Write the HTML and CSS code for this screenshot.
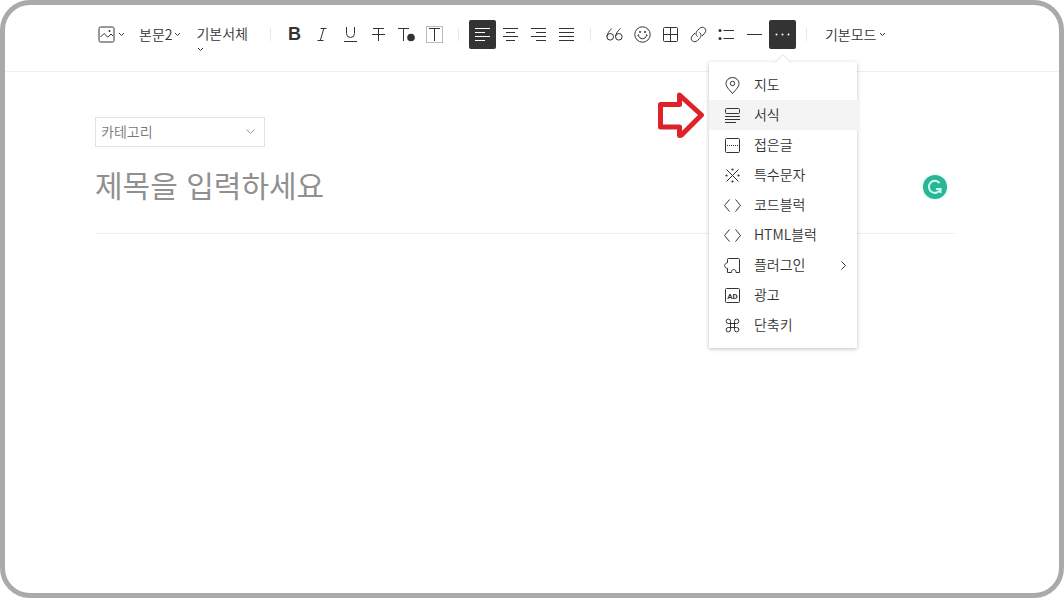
FILE: index.html
```
<!DOCTYPE html>
<html lang="ko">
<head>
    <meta charset="UTF-8">
    <meta name="viewport" content="width=device-width, initial-scale=1.0">
    <title>글쓰기</title>
    <link rel="stylesheet" href="styles.css">
</head>
<body>
<div class="frame">
    <header class="topbar">
        <div class="toolbar">
            <button class="drop drop-image" aria-label="사진">
                <svg width="17" height="17" viewBox="0 0 17 17"><rect x="1" y="1" width="15" height="15" rx="1.5"/><path d="M2.500 11 5.500 8c3-1 2 3 4.500 3l3-3 2 2"/><circle class="dot" cx="11.500" cy="5" r="1"/></svg>
                <svg class="chev" width="7" height="5" viewBox="0 0 7 5"><path d="M1 1l2.500 2.500L6 1"/></svg>
            </button>
            <button class="drop drop-style"><span class="label">본문2</span><svg class="chev" width="7" height="5" viewBox="0 0 7 5"><path d="M1 1l2.500 2.500L6 1"/></svg></button>
            <button class="drop drop-font"><span class="label">기본서체</span><svg class="chev" width="7" height="5" viewBox="0 0 7 5"><path d="M1 1l2.500 2.500L6 1"/></svg></button>
            <span class="sep"></span>
            <div class="group">
                <button class="tool" aria-label="굵게"><b>B</b></button>
                <button class="tool" aria-label="기울임"><svg width="17" height="17" viewBox="0 0 17 17"><path d="M6.500 2.500h6M3.500 14.500h6M9.800 2.500l-3.500 12"/></svg></button>
                <button class="tool" aria-label="밑줄"><svg width="17" height="17" viewBox="0 0 17 17"><path d="M4.500 1v6.500a4 4 0 0 0 8 0V1M2 15.500h13"/></svg></button>
                <button class="tool" aria-label="취소선"><svg width="17" height="17" viewBox="0 0 17 17"><path d="M3 2.500h11M8.500 2.500V15M2 8.500h13"/></svg></button>
                <button class="tool" aria-label="글자색"><svg width="17" height="17" viewBox="0 0 17 17"><path d="M0 2.500h11M5.500 2.500V15"/><circle class="dot" cx="13" cy="11.500" r="3.800"/></svg></button>
                <button class="tool" aria-label="배경색"><svg width="17" height="17" viewBox="0 0 17 17"><rect class="pale" x=".5" y=".5" width="16" height="16"/><path d="M3 2.500h11M8.500 2.500V15"/></svg></button>
            </div>
            <span class="sep"></span>
            <div class="group">
                <button class="tool on" aria-label="왼쪽 정렬"><svg width="17" height="17" viewBox="0 0 17 17"><path d="M1 2.500h15M1 6.500h10M1 10.500h15M1 14.500h10"/></svg></button>
                <button class="tool" aria-label="가운데 정렬"><svg width="17" height="17" viewBox="0 0 17 17"><path d="M1 2.500h15M4 6.500h9M1 10.500h15M4 14.500h9"/></svg></button>
                <button class="tool" aria-label="오른쪽 정렬"><svg width="17" height="17" viewBox="0 0 17 17"><path d="M1 2.500h15M6 6.500h10M1 10.500h15M6 14.500h10"/></svg></button>
                <button class="tool" aria-label="양쪽 정렬"><svg width="17" height="17" viewBox="0 0 17 17"><path d="M1 2.500h15M1 6.500h15M1 10.500h15M1 14.500h15"/></svg></button>
            </div>
            <span class="sep"></span>
            <div class="group">
                <button class="tool" aria-label="인용"><svg width="17" height="17" viewBox="0 0 17 17"><circle cx="4.200" cy="10.800" r="3.300"/><path d="M5.800 2.500C3 5 1.300 7.600.9 10.500"/><circle cx="12.800" cy="10.800" r="3.300"/><path d="M14.400 2.500C11.600 5 9.900 7.600 9.500 10.500"/></svg></button>
                <button class="tool" aria-label="이모티콘"><svg width="17" height="17" viewBox="0 0 17 17"><circle cx="8.500" cy="8.500" r="7.700"/><path d="M4.500 9c.5 5 7.500 5 8 0M3.500 9.500l1.500-1M13.500 9.500l-1.500-1"/><circle class="dot" cx="6" cy="6" r="1"/><circle class="dot" cx="11" cy="6" r="1"/></svg></button>
                <button class="tool" aria-label="표"><svg width="17" height="17" viewBox="0 0 17 17"><rect x="1.500" y="1.500" width="14" height="14" rx="1"/><path d="M8.500 1.500v14M1.500 8.500h14"/></svg></button>
                <button class="tool" aria-label="링크"><svg width="17" height="17" viewBox="0 0 17 17"><path d="M7.500 10.500c-2-1.500-2-4 0-6l2-2c3.500-3.500 8.500 1 5.200 4.700L12 10"/><path d="M9.500 6.500c2 1.500 2 4 0 6l-2 2C4 18-1 13.500 2.300 9.800L5 7"/></svg></button>
                <button class="tool" aria-label="목록"><svg width="17" height="17" viewBox="0 0 17 17"><circle class="dot" cx="2" cy="4.500" r="1.500"/><circle class="dot" cx="2" cy="12.500" r="1.500"/><path d="M5.500 4.500H16M5.500 12.500H16"/></svg></button>
                <button class="tool" aria-label="구분선"><svg width="17" height="17" viewBox="0 0 17 17"><path d="M1 8.500h15"/></svg></button>
                <div class="more">
                    <button class="tool on" aria-label="더보기"><svg width="17" height="17" viewBox="0 0 17 17"><circle class="dot" cx="2.500" cy="8.500" r="1"/><circle class="dot" cx="8.500" cy="8.500" r="1"/><circle class="dot" cx="14.500" cy="8.500" r="1"/></svg></button>
                    <div class="menu">
                        <svg class="notch" width="18" height="10" viewBox="0 0 18 10"><path d="M1 9.500l8-8 8 8"/></svg>
                        <button class="item"><svg width="17" height="17" viewBox="0 0 17 17"><path d="M8.500 16.500C5 12.500 2 9.800 2 6.500a6.500 6 0 0 1 13 0c0 3.300-3 6-6.500 10z"/><circle cx="8.500" cy="6.500" r="2.200"/></svg><span class="label">지도</span></button>
                        <button class="item current"><svg width="17" height="17" viewBox="0 0 17 17"><rect x="1.500" y="1.500" width="14" height="5" rx="1"/><path d="M1 9.500h15M1 12.500h15M1 15.500h11"/></svg><span class="label">서식</span>
                            <svg class="pointer" width="48" height="48" viewBox="0 0 48 48"><path d="M3.500 13.500h19V4L44.500 24l-20 20-2 .5V36h-19z"/></svg>
                        </button>
                        <button class="item"><svg width="17" height="17" viewBox="0 0 17 17"><rect x="1.500" y="1.500" width="14" height="14" rx="1"/><path class="dots" d="M3 8.500h11.500"/></svg><span class="label">접은글</span></button>
                        <button class="item"><svg width="17" height="17" viewBox="0 0 17 17"><path d="M2.500 2.500l12 12M14.500 2.500l-12 12"/><circle class="dot" cx="8.500" cy="2.500" r="1.100"/><circle class="dot" cx="8.500" cy="14.500" r="1.100"/><circle class="dot" cx="2.500" cy="8.500" r="1.100"/><circle class="dot" cx="14.500" cy="8.500" r="1.100"/></svg><span class="label">특수문자</span></button>
                        <button class="item"><svg width="17" height="17" viewBox="0 0 17 17"><path d="M5.500 2.500l-5 6 5 6M11.500 2.500l5 6-5 6"/></svg><span class="label">코드블럭</span></button>
                        <button class="item"><svg width="17" height="17" viewBox="0 0 17 17"><path d="M5.500 2.500l-5 6 5 6M11.500 2.500l5 6-5 6"/></svg><span class="label">HTML블럭</span></button>
                        <button class="item"><svg width="17" height="17" viewBox="0 0 17 17"><path d="M4.500 1.500h10a1 1 0 0 1 1 1v13h-3.500c.5-4-5-4-4.500 0h-4v-4.200C.2 11.700-.6 6.300 3.500 5.700V2.500a1 1 0 0 1 1-1z"/></svg><span class="label">플러그인</span><svg class="go" width="7" height="9" viewBox="0 0 7 9"><path d="M1.500 .5l4 4-4 4"/></svg></button>
                        <button class="item"><svg width="17" height="17" viewBox="0 0 17 17"><rect x="1.500" y="1.500" width="14" height="14" rx="1"/><text class="ad" x="8.500" y="11.500">AD</text></svg><span class="label">광고</span></button>
                        <button class="item"><svg width="17" height="17" viewBox="0 0 17 17"><path d="M6.500 6.500v-2a2.200 2.200 0 1 0-2.200 2h8.400a2.200 2.200 0 1 0-2.200-2v8a2.200 2.200 0 1 0 2.200-2H4.300a2.200 2.200 0 1 0 2.200 2z"/></svg><span class="label">단축키</span></button>
                    </div>
                </div>
            </div>
            <span class="sep"></span>
            <button class="drop drop-mode"><span class="label">기본모드</span><svg class="chev" width="7" height="5" viewBox="0 0 7 5"><path d="M1 1l2.500 2.500L6 1"/></svg></button>
        </div>
    </header>
    <main class="editor">
        <div class="category">
            <select aria-label="카테고리"><option>카테고리</option></select>
            <svg class="arrow" width="9" height="6" viewBox="0 0 9 6"><path d="M.5 .5l4 4 4-4"/></svg>
        </div>
        <div class="title-row">
            <input class="title" type="text" placeholder="제목을 입력하세요" aria-label="제목">
            <button class="checker" aria-label="맞춤법 검사"><svg width="16" height="16" viewBox="0 0 16 16"><path d="M12.500 4A6 6 0 1 0 13.500 10H9M13.500 9v5"/></svg></button>
        </div>
    </main>
</div>
</body>
</html>
```
FILE: styles.css
```
* { box-sizing: border-box; }
body {
    margin: 0;
    background: #fff;
    color: #333;
    font-family: "Noto Sans CJK KR", sans-serif;
    font-size: 14px;
    font-weight: 350;
}
button, input, select { font: inherit; color: inherit; }
button { border: none; background: none; padding: 0; cursor: pointer; }
svg { fill: none; stroke: #333; flex: none; }
svg .dot { fill: #333; stroke: none; }
.label { padding-bottom: 2px; line-height: 20px; }
.frame {
    min-height: 100vh;
    border: 5px solid #aaa;
    border-radius: 30px;
}

/* toolbar */
.topbar {
    height: 67px;
    padding: 15px 14px 0 0;
    border-bottom: 1px solid #eee;
}
.toolbar {
    display: flex;
    align-items: flex-start;
    max-width: 860px;
    margin: 0 auto;
}
.drop {
    display: flex;
    align-items: center;
    height: 29px;
    gap: 2px;
    white-space: nowrap;
}
.drop-image { margin-left: 3px; gap: 3px; }
.drop-style { margin-left: 14px; }
.drop-font {
    flex-direction: column;
    align-items: flex-start;
    margin: 3px 22px 0 15px;
}
.drop-font .chev { margin-left: 1px; }
.drop-mode { margin-left: 18px; }
.sep { width: 1px; height: 13px; margin-top: 8px; background: #e8e8e8; }
.group { display: flex; gap: 1px; margin: 0 10px; }
.tool {
    display: flex;
    align-items: center;
    justify-content: center;
    width: 27px;
    height: 29px;
    border-radius: 2px;
}
.tool b { font: bold 18px "Liberation Sans", sans-serif; }
.tool.on { background: #333; }
.tool.on svg { stroke: #fff; }
.tool.on .dot { fill: #fff; }
svg .pale { stroke: #bbb; }

/* more menu */
.more { position: relative; }
.menu {
    position: absolute;
    top: 42px;
    right: -61px;
    z-index: 2;
    width: 148px;
    padding: 8px 0;
    background: #fff;
    box-shadow: 0 1px 4px rgba(0, 0, 0, .25);
}
.notch {
    position: absolute;
    top: -9px;
    left: 65px;
    fill: #fff;
    stroke: #ddd;
}
.item {
    position: relative;
    display: flex;
    align-items: center;
    width: 100%;
    height: 30px;
    padding: 0 10px 0 15px;
    gap: 13px;
}
.item.current { width: calc(100% + 2px); background: #f4f4f4; }
.item .go { margin-left: auto; }
.item .dots { stroke-dasharray: 1 1; }
.item .ad {
    fill: #333;
    stroke: none;
    font: bold 8px Roboto, sans-serif;
    text-anchor: middle;
}
.item .pointer {
    position: absolute;
    top: -9px;
    left: -52px;
    fill: #fff;
    stroke: #dd2229;
    stroke-width: 5;
    stroke-linejoin: round;
}

/* editor */
.editor { padding: 45px 14px 0 0; }
.category, .title-row { max-width: 860px; margin: 0 auto; }
.category { display: flex; align-items: center; }
.category select {
    appearance: none;
    width: 170px;
    height: 30px;
    padding: 0 5px 2px;
    border: 1px solid #e2e2e2;
    border-radius: 0;
    background: none;
    color: #777;
}
.category .arrow { margin-left: -19px; stroke: #999; pointer-events: none; }
.title-row {
    display: flex;
    align-items: center;
    height: 87px;
    padding: 0 8px 7px 0;
    border-bottom: 1px solid #eee;
}
.title {
    flex: 1;
    min-width: 0;
    padding: 0 0 6px;
    border: none;
    outline: none;
    background: none;
    font-size: 30px;
    font-weight: 400;
}
.title::placeholder { color: #909090; opacity: 1; }
.checker {
    display: flex;
    align-items: center;
    justify-content: center;
    width: 24px;
    height: 24px;
    border-radius: 50%;
    background: #2bb597;
    box-shadow: 0 0 3px #b5f5e8;
}
.checker svg { stroke: #c5fff2; stroke-width: 2; }
```
